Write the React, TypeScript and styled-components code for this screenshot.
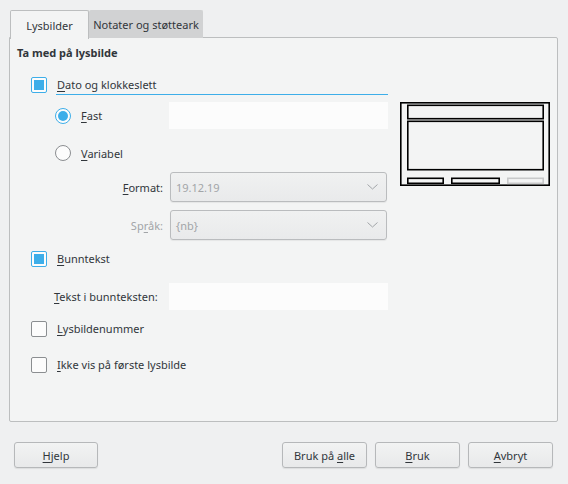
import React from 'react';
import styled, {createGlobalStyle} from 'styled-components';

const GlobalStyle = createGlobalStyle`
  html, body {
    margin: 0;
    background: #eff0f1;
  }
  body {
    font-family: "Noto Sans", "DejaVu Sans", sans-serif;
    font-size: 11px;
    color: #31363b;
  }
  u {
    text-decoration: underline;
    text-underline-offset: 2px;
  }
`

const Dialog = styled.div`
  width: 568px;
  height: 484px;
  box-sizing: border-box;
  padding: 10px 10px 0 9px;
  display: flex;
  flex-direction: column;
`
const TabBar = styled.div`
  display: flex;
  height: 28px;
  padding-left: 1px;
  margin-bottom: -1px;
`
const Tab = styled.div<{ $active?: boolean }>`
  position: relative;
  z-index: ${p => (p.$active ? 1 : 0)};
  box-sizing: border-box;
  height: ${p => (p.$active ? '29px' : '28px')};
  padding: 0;
  display: flex;
  align-items: center;
  justify-content: center;
  white-space: nowrap;
  background: ${p => (p.$active ? '#f3f4f4' : '#d1d2d3')};
  border: 1px solid ${p => (p.$active ? '#bcbebf' : '#d1d2d3')};
  border-bottom: none;
  border-radius: 2px 2px 0 0;
  width: ${p => (p.$active ? '79px' : '114px')};
`
const Panel = styled.div`
  box-sizing: border-box;
  width: 549px;
  height: 385px;
  background: #f3f4f4;
  border: 1px solid #bcbebf;
  border-radius: 0 2px 2px 2px;
  padding: 8px 7px 0 7px;
`
const Heading = styled.div`
  height: 14px;
  line-height: 14px;
  font-weight: 700;
`
const Body = styled.div`
  display: flex;
  align-items: flex-start;
`
const Form = styled.div`
  width: 372px;
  display: flex;
  flex-direction: column;
`
const Row = styled.div<{ $top: number; $h: number; $indent?: number }>`
  display: flex;
  align-items: center;
  margin-top: ${p => p.$top}px;
  height: ${p => p.$h}px;
  padding-left: ${p => p.$indent ?? 0}px;
`
const Check = styled.span<{ $on?: boolean }>`
  flex: none;
  box-sizing: border-box;
  width: 16px;
  height: 16px;
  border: 1px solid ${p => (p.$on ? '#3daee9' : '#8b8e91')};
  border-radius: 2px;
  background: #fcfcfc;
  display: flex;
  align-items: center;
  justify-content: center;

  &::after {
    content: "";
    display: ${p => (p.$on ? 'block' : 'none')};
    width: 10px;
    height: 10px;
    background: #3daee9;
  }
`
const Radio = styled(Check)`
  border-radius: 50%;

  &::after {
    width: 10px;
    height: 10px;
    border-radius: 50%;
  }
`
const Label = styled.span<{ $gap?: number; $muted?: boolean }>`
  margin-left: ${p => p.$gap ?? 10}px;
  white-space: nowrap;
  color: ${p => (p.$muted ? '#a2a5a8' : 'inherit')};
`
const FocusLabel = styled.span`
  flex: 1;
  align-self: stretch;
  margin-left: 9px;
  padding-left: 1px;
  display: flex;
  align-items: center;
  border-bottom: 1px solid #3daee9;
`
const SideLabel = styled.span<{ $muted?: boolean }>`
  flex: 1;
  text-align: right;
  padding-right: 7px;
  color: ${p => (p.$muted ? '#a2a5a8' : 'inherit')};
`
const TextField = styled.div`
  flex: none;
  margin-left: auto;
  width: 219px;
  align-self: stretch;
  background: #fcfcfc;
`
const Combo = styled.div`
  flex: none;
  box-sizing: border-box;
  width: 217px;
  margin-right: 1px;
  align-self: stretch;
  border: 1px solid #babcbe;
  border-radius: 3px;
  background: linear-gradient(#f0f1f1, #e9eaeb);
  box-shadow: 0 1px 1px rgba(0, 0, 0, 0.06);
  display: flex;
  align-items: center;
  justify-content: space-between;
  padding: 0 8px 0 5px;
  color: #a2a5a8;
`
const Preview = styled.svg`
  flex: none;
  margin: 42px 0 0 12px;
`
const Buttons = styled.div`
  display: flex;
  gap: 8px;
  margin-top: 20px;
  padding: 0 5px;
`
const Spacer = styled.div`
  flex: 1;
`
const Button = styled.button<{ $w?: number }>`
  box-sizing: border-box;
  width: ${p => p.$w ?? 85}px;
  height: 26px;
  font: inherit;
  color: inherit;
  border: 1px solid #b6b8ba;
  border-radius: 3px;
  background: linear-gradient(#f2f3f3, #e8e9ea);
  box-shadow: 0 1px 1px rgba(0, 0, 0, 0.08);
  padding: 0;
`

const Chevron = () => (
    <svg width="11" height="6" viewBox="0 0 11 6">
        <polyline points="0.5,0.5 5.5,5 10.5,0.5" fill="none" stroke="#a2a5a8" strokeWidth="1"/>
    </svg>
)

const SlideLayout = () => (
    <Preview width="150" height="84" viewBox="0 0 150 84">
        <g fill="none" strokeWidth="1.6">
            <rect x="0.8" y="0.8" width="148.4" height="82.4" stroke="#000"/>
            <rect x="7.8" y="3.3" width="135.4" height="13.4" stroke="#000"/>
            <rect x="7.8" y="19.3" width="135.4" height="48.4" stroke="#000"/>
            <rect x="7.8" y="76.3" width="35.4" height="5" stroke="#000"/>
            <rect x="51.8" y="76.3" width="47.4" height="5" stroke="#000"/>
            <rect x="107.8" y="76.3" width="35.4" height="5" stroke="#c8c9ca"/>
        </g>
    </Preview>
)

export default function App() {
    return (
        <>
            <GlobalStyle/>
            <Dialog>
                <TabBar>
                    <Tab $active>Lysbilder</Tab>
                    <Tab>Notater og støtteark</Tab>
                </TabBar>
                <Panel>
                    <Heading>Ta med på lysbilde</Heading>
                    <Body>
                        <Form>
                            <Row $top={14} $h={21} $indent={14}>
                                <Check $on/>
                                <FocusLabel><span><u>D</u>ato og klokkeslett</span></FocusLabel>
                            </Row>
                            <Row $top={7} $h={27} $indent={38}>
                                <Radio $on/>
                                <Label><u>F</u>ast</Label>
                                <TextField/>
                            </Row>
                            <Row $top={13} $h={22} $indent={38}>
                                <Radio/>
                                <Label><u>V</u>ariabel</Label>
                            </Row>
                            <Row $top={8} $h={30}>
                                <SideLabel><u>F</u>ormat:</SideLabel>
                                <Combo>19.12.19<Chevron/></Combo>
                            </Row>
                            <Row $top={8} $h={30}>
                                <SideLabel $muted>Sp<u>r</u>åk:</SideLabel>
                                <Combo>{'{nb}'}<Chevron/></Combo>
                            </Row>
                            <Row $top={8} $h={21} $indent={14}>
                                <Check $on/>
                                <Label><u>B</u>unntekst</Label>
                            </Row>
                            <Row $top={14} $h={27} $indent={37}>
                                <Label $gap={0}><u>T</u>ekst i bunnteksten:</Label>
                                <TextField/>
                            </Row>
                            <Row $top={8} $h={21} $indent={14}>
                                <Check/>
                                <Label><u>L</u>ysbildenummer</Label>
                            </Row>
                            <Row $top={15} $h={21} $indent={14}>
                                <Check/>
                                <Label><u>I</u>kke vis på første lysbilde</Label>
                            </Row>
                        </Form>
                        <SlideLayout/>
                    </Body>
                </Panel>
                <Buttons>
                    <Button $w={84}><u>H</u>jelp</Button>
                    <Spacer/>
                    <Button>Bruk på <u>a</u>lle</Button>
                    <Button><u>B</u>ruk</Button>
                    <Button><u>A</u>vbryt</Button>
                </Buttons>
            </Dialog>
        </>
    );
}
